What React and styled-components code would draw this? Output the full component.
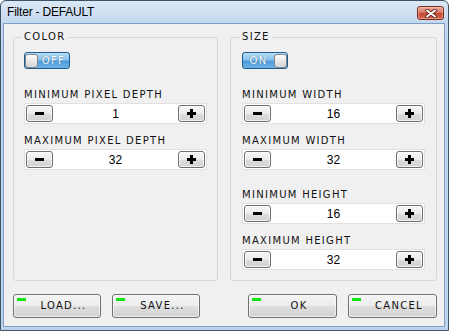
import React from "react";
import styled, { createGlobalStyle } from "styled-components";

const GlobalStyle = createGlobalStyle`
  html, body {
    margin: 0;
    padding: 0;
    background: #ffffff;
  }
`;

const PIXEL_FONT = `"DejaVu Sans", "Liberation Sans", sans-serif`;

const Window = styled.div`
  box-sizing: border-box;
  width: 449px;
  height: 331px;
  display: flex;
  flex-direction: column;
  padding: 0 3px 3px 2px;
  border: 1px solid #3e5266;
  border-radius: 6px 6px 0 0;
  background: linear-gradient(#dbe8f6, #c3d8ee 22px, #bcd3ec 60px, #bcd3ec);
  font-family: ${PIXEL_FONT};
`;

const TitleBar = styled.div`
  height: 22px;
  display: flex;
  justify-content: space-between;
  align-items: flex-start;
`;

const Title = styled.div`
  padding: 4px 0 0 4px;
  font-family: "Liberation Sans", Arial, sans-serif;
  font-size: 12px;
  line-height: 14px;
  letter-spacing: -0.2px;
  color: #000;
`;

const CloseButton = styled.div`
  box-sizing: border-box;
  width: 27px;
  height: 14px;
  margin: 5px 1px 0 0;
  display: flex;
  align-items: center;
  justify-content: center;
  border: 1px solid #7b2a1b;
  border-radius: 3px;
  background: linear-gradient(#eab0a2 0%, #d87a64 45%, #c44a30 52%, #d46a50 100%);
  box-shadow: inset 0 0 0 1px rgba(255, 210, 200, 0.45);
`;

const Client = styled.div`
  flex: 1;
  display: flex;
  flex-direction: column;
  background: #f0f0f0;
  border: 1px solid #7d9fc4;
  padding: 7px 7px 8px 9px;
`;

const Groups = styled.div`
  flex: 1;
  display: grid;
  grid-template-columns: 205px 207px;
  column-gap: 12px;
`;

const Group = styled.fieldset`
  margin: 0;
  min-width: 0;
  padding: 0 ${(p) => p.$pad}px;
  display: flex;
  flex-direction: column;
  border: 1px solid #d3d9de;
  border-radius: 3px;
`;

const Legend = styled.legend`
  margin-left: -2px;
  padding: 0 2px;
  font-size: 10px;
  line-height: 12px;
  letter-spacing: 1.3px;
  color: #111;
`;

const ToggleShell = styled.div`
  box-sizing: border-box;
  align-self: flex-start;
  margin-top: 9px;
  width: 46px;
  height: 17px;
  display: flex;
  align-items: center;
  flex-direction: ${(p) => (p.$on ? "row" : "row-reverse")};
  border: 1px solid #1f5d8f;
  border-radius: 3px;
  background: linear-gradient(#b9ddf7 0%, #86c2ec 45%, #4e9cda 55%, #6cb3e9 100%);
`;

const ToggleText = styled.span`
  flex: 1;
  text-align: center;
  font-size: 10px;
  line-height: 12px;
  letter-spacing: 1.3px;
  color: #ffffff;
  text-shadow: 0 0 1px rgba(0, 40, 80, 0.7);
`;

const Knob = styled.span`
  box-sizing: border-box;
  width: 13px;
  height: 14px;
  border: 1px solid #858585;
  border-radius: 3px;
  background: linear-gradient(#fdfdfd, #e8e8e8 50%, #d6d6d6);
`;

const Field = styled.div`
  margin-top: ${(p) => p.$gap}px;
  display: flex;
  flex-direction: column;
  gap: 2px;
`;

const Label = styled.div`
  font-size: 10px;
  line-height: 12px;
  letter-spacing: 1.3px;
  color: #111;
  white-space: nowrap;
`;

const Stepper = styled.div`
  box-sizing: border-box;
  height: 21px;
  display: flex;
  align-items: center;
  padding: 0 1px;
  background: #ffffff;
  border: 1px solid #e1e1e1;
`;

const StepButton = styled.div`
  box-sizing: border-box;
  width: 27px;
  height: 17px;
  display: flex;
  align-items: center;
  justify-content: center;
  border: 1px solid #6f6f6f;
  border-radius: 3px;
  background: linear-gradient(#f7f7f7, #ebebeb 50%, #dcdcdc 52%, #d2d2d2);
  box-shadow: inset 0 0 0 1px rgba(255, 255, 255, 0.7);
`;

const Value = styled.div`
  flex: 1;
  text-align: center;
  font-family: "Liberation Sans", Arial, sans-serif;
  font-size: 12px;
  line-height: 14px;
  color: #000;
`;

const Footer = styled.div`
  margin-top: 13px;
  display: flex;
  justify-content: space-between;
`;

const ButtonGroup = styled.div`
  display: flex;
  gap: 11px;
`;

const ActionButton = styled.div`
  position: relative;
  box-sizing: border-box;
  width: ${(p) => p.$w}px;
  height: 24px;
  padding: 5px 0 0 13px;
  border: 1px solid #707070;
  border-radius: 3px;
  background: linear-gradient(#f4f4f4, #ececec 50%, #dedede 52%, #d2d2d2);
  box-shadow: inset 0 0 0 1px rgba(255, 255, 255, 0.6);
  font-size: 10px;
  line-height: 12px;
  letter-spacing: 1.3px;
  text-align: center;
  color: #111;

  &::before {
    content: "";
    position: absolute;
    left: 3px;
    top: 3px;
    width: 9px;
    height: 3px;
    background: #14e614;
  }
`;

const MinusIcon = () => (
  <svg width="9" height="3" viewBox="0 0 9 3">
    <rect width="9" height="3" fill="#000" />
  </svg>
);

const PlusIcon = () => (
  <svg width="9" height="9" viewBox="0 0 9 9">
    <rect x="3" y="0" width="3" height="9" fill="#000" />
    <rect x="0" y="3" width="9" height="3" fill="#000" />
  </svg>
);

const CloseIcon = () => (
  <svg width="12" height="9" viewBox="0 0 12 9">
    <path d="M2 1.5 L10 7.5 M10 1.5 L2 7.5" stroke="#5a1c12" strokeWidth="3.6" strokeLinecap="round" />
    <path d="M2 1.5 L10 7.5 M10 1.5 L2 7.5" stroke="#ffffff" strokeWidth="2" strokeLinecap="round" />
  </svg>
);

const Toggle = ({ on }) => (
  <ToggleShell $on={on}>
    <ToggleText>{on ? "ON" : "OFF"}</ToggleText>
    <Knob />
  </ToggleShell>
);

const NumberField = ({ label, value, gap }) => (
  <Field $gap={gap}>
    <Label>{label}</Label>
    <Stepper>
      <StepButton>
        <MinusIcon />
      </StepButton>
      <Value>{value}</Value>
      <StepButton>
        <PlusIcon />
      </StepButton>
    </Stepper>
  </Field>
);

export default function App() {
  return (
    <>
      <GlobalStyle />
      <Window>
        <TitleBar>
          <Title>Filter - DEFAULT</Title>
          <CloseButton>
            <CloseIcon />
          </CloseButton>
        </TitleBar>
        <Client>
          <Groups>
            <Group $pad={10}>
              <Legend>COLOR</Legend>
              <Toggle on={false} />
              <NumberField label="MINIMUM PIXEL DEPTH" value="1" gap={20} />
              <NumberField label="MAXIMUM PIXEL DEPTH" value="32" gap={11} />
            </Group>
            <Group $pad={11}>
              <Legend>SIZE</Legend>
              <Toggle on={true} />
              <NumberField label="MINIMUM WIDTH" value="16" gap={20} />
              <NumberField label="MAXIMUM WIDTH" value="32" gap={11} />
              <NumberField label="MINIMUM HEIGHT" value="16" gap={19} />
              <NumberField label="MAXIMUM HEIGHT" value="32" gap={11} />
            </Group>
          </Groups>
          <Footer>
            <ButtonGroup>
              <ActionButton $w={88}>LOAD...</ActionButton>
              <ActionButton $w={88}>SAVE...</ActionButton>
            </ButtonGroup>
            <ButtonGroup>
              <ActionButton $w={89}>OK</ActionButton>
              <ActionButton $w={89}>CANCEL</ActionButton>
            </ButtonGroup>
          </Footer>
        </Client>
      </Window>
    </>
  );
}
